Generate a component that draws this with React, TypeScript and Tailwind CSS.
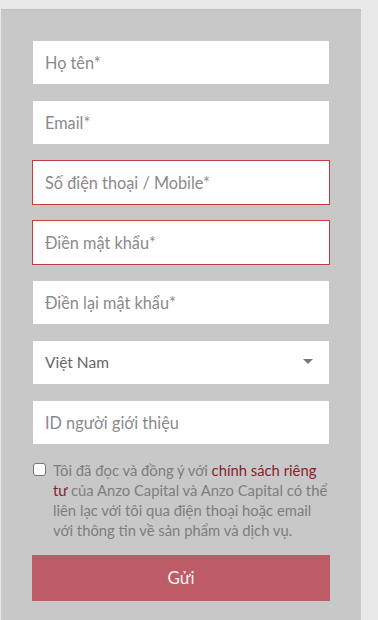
import React from "react";

const font = { fontFamily: "Lato, 'Noto Sans', sans-serif" };

function Field({ placeholder, error }: { placeholder: string; error?: boolean }) {
  return (
    <input
      type="text"
      placeholder={placeholder}
      className={
        "block w-full h-[43px] bg-white px-[12px] text-[16.3px] text-[#555] placeholder:text-[#8a8a8a] outline-none border-0 " +
        (error ? "ring-1 ring-[#c23c40]" : "")
      }
      style={font}
    />
  );
}

export default function App() {
  return (
    <div className="min-h-[620px] bg-[#e8e8e8] pt-[9px] pl-[1px]" style={font}>
      <div className="w-[360px] min-h-[611px] bg-[#c8c8c8] border-t border-[#bebebe] px-[32px] pt-[31px] pb-[20px]">
        <div className="flex flex-col gap-[17px]">
          <Field placeholder="Họ tên*" />
          <Field placeholder="Email*" />
          <Field placeholder="Số điện thoại / Mobile*" error />
          <Field placeholder="Điền mật khẩu*" error />
          <Field placeholder="Điền lại mật khẩu*" />
          <div className="flex items-center justify-between h-[43px] bg-white pl-[12px] pr-[16px] text-[15.5px] text-[#666]">
            <span>Việt Nam</span>
            <svg width="10" height="5" viewBox="0 0 10 5" className="-mt-[2px]">
              <path d="M0 0 L10 0 L5 5 Z" fill="#777" />
            </svg>
          </div>
          <Field placeholder="ID người giới thiệu" />
        </div>
        <div className="flex items-start gap-[7px] mt-[16px]">
          <span className="mt-[3px] w-[13px] h-[13px] shrink-0 rounded-[3px] border border-[#767676] bg-white" />
          <p className="text-[14.8px] leading-[20px] text-[#7d7d7d] w-[280px]">
            Tôi đã đọc và đồng ý với <span className="text-[#8a1c2e]">chính sách riêng tư</span> của Anzo Capital và Anzo Capital có thể liên lạc với tôi qua điện thoại hoặc email với thông tin về sản phẩm và dịch vụ.
          </p>
        </div>
        <button
          type="button"
          className="block -mx-[1px] w-[298px] h-[46px] mt-[15px] bg-[#bd5c66] text-[#f2f2f2] text-[17px]"
          style={font}
        >
          Gửi
        </button>
      </div>
    </div>
  );
}
